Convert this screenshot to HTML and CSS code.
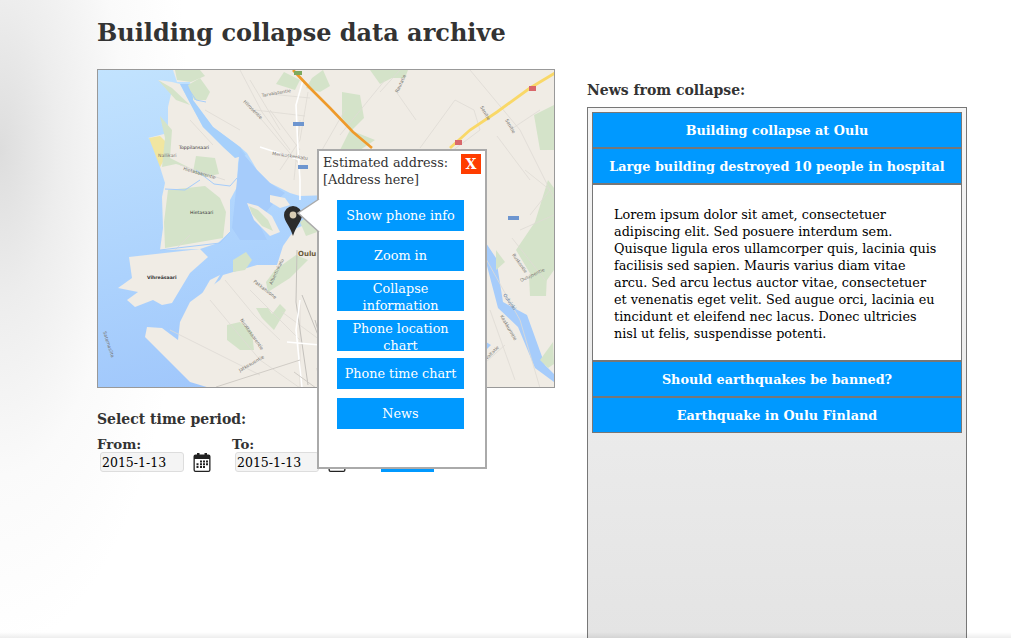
FILE: index.html
```html
<!DOCTYPE html>
<html lang="en">
<head>
<meta charset="utf-8">
<title>Building collapse data archive</title>
<link rel="stylesheet" href="styles.css">
</head>
<body>
<div class="page">
  <h1 class="title">Building collapse data archive</h1>
  <div class="columns">
    <div class="left">
      <div class="map-wrap">
        <svg class="map" viewBox="98 70 456 317" preserveAspectRatio="none" aria-label="Map of Oulu">
          <defs>
            <linearGradient id="sea" x1="0" y1="0" x2="0.35" y2="1">
              <stop offset="0" stop-color="#c2e3fe"/>
              <stop offset="0.6" stop-color="#acd2fd"/>
              <stop offset="1" stop-color="#9fc6fb"/>
            </linearGradient>
            <filter id="soft"><feGaussianBlur stdDeviation="0.4"/></filter>
          </defs>
          <rect x="98" y="70" width="456" height="317" fill="url(#sea)"/>
          <g filter="url(#soft)">
            <path class="land" d="M173 70L177 82L190 82L193 100L213 127L240 147L247 153L257 170L270 183L290 193L300 196L330 195L330 215L297 228L290 236L283 246L277 265L257 265L223 275L220 280L190 302L180 322L178 340L162 328L147 327L145 337L190 382L210 388L554 388L554 70Z"/>
            <path class="land" d="M158 80L172 90L168 107L168 133L148 138L162 143L160 167L165 183L162 197L163 228L160 250L200 249L218 243L230 232L230 200L237 187L238 163L240 150L223 145L203 127L190 103L180 84L172 82Z"/>
            <path class="land" d="M129 257L200 249L208 257L190 273L172 303L162 305L153 300L135 307L127 300L138 292L118 288L132 278Z"/>
            <path class="water-river" d="M180 84L193 84L193 100L213 127L240 147L246 155L235 158L223 147L203 127L190 103Z"/>
            <path class="water" d="M240 150L257 170L270 183L285 193L272 205L258 222L267 240L240 240L232 228L236 190Z"/>
            <path class="land" d="M270 195L285 198L290 205L280 208L270 202Z"/>
            <path class="land" d="M247 203L258 206L272 216L280 232L270 236L254 220Z"/>
            <path class="park" d="M249 206L258 210L268 220L273 231L262 226L252 214Z"/>
            <path class="water" d="M486 243L496 258L503 302L527 315L545 365L554 374L554 382L535 368L518 327L498 308L486 262Z"/>
            <path class="water" d="M486 342L491 345L486 350Z"/>
            <path class="sand" d="M149 138L160 136L166 142L164 160L160 167Z"/>
            <path class="park" d="M160 116L172 130L170 158L190 168L176 164L162 167L165 138Z"/>
            <path class="park" d="M196 156L215 158L219 174L205 177L193 172Z"/>
            <path class="park" d="M168 190L205 186L220 198L226 212L223 238L165 248L164 222Z"/>
            <path class="park" d="M158 80L172 88L190 105L176 100Z"/>
            <path class="park" d="M188 85L200 78L210 92L206 100L194 100Z"/>
            <path class="park" d="M175 70L200 70L205 76L191 82L177 80Z"/>
            <path class="park" d="M233 260L246 252L252 260L245 270L233 272Z"/>
            <path class="land" d="M195 306L210 280L220 275L212 288L198 305Z"/>
            <path class="park" d="M227 325L240 322L252 332L254 350L240 350L227 340Z"/>
            <path class="park" d="M266 282L275 270L296 255L308 260L290 278L268 292Z"/>
            <path class="park" d="M256 308L268 308L272 314L280 304L286 310L274 330L262 318Z"/>
            <path class="park" d="M300 222L317 210L317 232L306 236Z"/>
            <path class="park" d="M323 70L330 86L320 92L306 88L312 78Z"/>
            <path class="park" d="M342 92L360 95L364 118L352 130L342 118Z"/>
            <path class="park" d="M370 70L408 70L405 78L392 78L380 84Z"/>
            <path class="park" d="M350 130L375 140L360 150L340 150Z"/>
            <path class="park" d="M516 250L535 222L548 180L554 188L554 270L540 290L528 270Z"/>
            <path class="park" d="M534 115L554 105L554 150L540 150Z"/>
            <path class="park" d="M529 276L547 275L546 296L530 296Z"/>
            <path class="park" d="M496 250L505 262L496 270Z"/>
            <path class="park" d="M540 360L553 342L554 364L548 368Z"/>
            <path class="park" d="M284 72L300 80L295 90L276 84Z"/>
            <path class="minor" d="M240 70L262 112L290 150M250 80L280 130M270 94L310 98M255 110L305 116M300 120L294 180M270 110L300 150M245 100L300 165M308 92L300 140L280 170M340 135L385 80M322 150L345 110M420 148L455 100L474 110L480 130L440 160M395 90L416 120M380 92L400 70M470 70L520 130L560 210M540 110L510 130M525 170L550 190L530 215M520 230L554 215M497 136L530 180M512 238L545 280M470 230L520 320L540 388M490 310L515 380M505 345L486 362M180 165L225 180M205 110L240 130M190 120L213 145M175 250L190 235M210 300L260 360L300 388M170 330L260 375M250 290L300 340M225 280L254 315L280 340M300 300L300 388M282 312L320 340"/>
            <path class="dark" d="M297 250L296 302L308 385M302 295L320 340L326 388M315 320L330 372"/>
            <path class="road" d="M303 80L296 105L298 150L300 180L300 200M300 300L296 330L302 388M260 147L300 160M287 342L320 345"/>
            <path class="tract" d="M294 372L316 388M317 368L320 388M216 387L300 360"/>
            <path class="orange" d="M293 70L310 88L330 108L353 132L372 148"/>
            <path class="yellow" d="M555 73L530 88L497 112L470 130L450 148"/>
            <path class="water-thin" d="M188 88L196 100L206 102M196 170L214 184L230 186L237 178M165 189L185 190L200 180M160 250L220 243L230 232"/>
          </g>
          <rect class="shield-r" x="529" y="86" width="7" height="5"/>
          <rect class="shield-r" x="455" y="140" width="7" height="5"/>
          <rect class="shield-b" x="293" y="122" width="11" height="4"/>
          <rect class="shield-b" x="298" y="165" width="10" height="4"/>
          <rect class="shield-b" x="508" y="216" width="11" height="4"/>
          <rect class="shield-g" x="294" y="71" width="8" height="4"/>
          <text class="lbl dk" x="179" y="149">Toppilansaari</text>
          <text class="lbl" x="158" y="157">Nallikari</text>
          <text class="lbl dk" x="190" y="214">Hietasaari</text>
          <text class="lbl dk b" x="147" y="279">Vihreäsaari</text>
          <text class="lbl city" x="298" y="256">Oulu</text>
          <text class="lbl" transform="translate(103 332) rotate(72)">Satamasilta</text>
          <text class="lbl" transform="translate(243 102) rotate(45)">Hiirosentie</text>
          <text class="lbl" transform="translate(262 97) rotate(-10)">Tarvaistentie</text>
          <text class="lbl" transform="translate(183 170) rotate(16)">Hietasaarentie</text>
          <text class="lbl" transform="translate(272 285) rotate(-65)">Albertinkatu</text>
          <text class="lbl" transform="translate(253 282) rotate(38)">Pakkahuone</text>
          <text class="lbl" transform="translate(240 372) rotate(-30)">Jatkosuontie</text>
          <text class="lbl" transform="translate(240 320) rotate(55)">Nuottasaarentie</text>
          <text class="lbl" transform="translate(272 155) rotate(8)">Merikoskenkatu</text>
          <text class="lbl" transform="translate(398 93) rotate(-65)">Rautatie</text>
          <text class="lbl" transform="translate(480 107) rotate(60)">Sanitie</text>
          <text class="lbl" transform="translate(505 120) rotate(60)">Sanitie</text>
          <text class="lbl" transform="translate(512 255) rotate(55)">Ruskontie</text>
          <text class="lbl" transform="translate(521 282) rotate(-25)">Oulujoentie</text>
          <text class="lbl water-lbl" transform="translate(503 295) rotate(55)">Oulujoki</text>
          <text class="lbl" transform="translate(500 316) rotate(60)">Kaakkurintie</text>
          <text class="lbl" transform="translate(487 360) rotate(-45)">Valtatie</text>
          <path class="pin" d="M293 206a9 9 0 0 1 9 9c0 6-6 11-9 21c-3-10-9-15-9-21a9 9 0 0 1 9-9z"/>
          <circle class="pin-dot" cx="293" cy="215" r="3.4"/>
        </svg>
        <div class="popup">
          <svg class="popup-tail" viewBox="0 0 24 40" aria-hidden="true">
            <path class="tail-shape" d="M23 3L2 17L23 36"/>
          </svg>
          <div class="popup-head">
            <p class="address">Estimated address:<br>[Address here]</p>
            <button class="close" type="button">X</button>
          </div>
          <div class="actions">
            <a class="action action-one">Show phone info</a>
            <a class="action action-one">Zoom in</a>
            <a class="action">Collapse information</a>
            <a class="action action-narrow">Phone location chart</a>
            <a class="action action-one">Phone time chart</a>
            <a class="action action-one">News</a>
          </div>
        </div>
      </div>
      <h2 class="subhead time-head">Select time period:</h2>
      <div class="dates">
        <div class="date-field">
          <label class="date-label">From:</label>
          <div class="date-row">
            <input class="date-input" type="text" value="2015-1-13">
            <svg class="cal" viewBox="0 0 20 20" aria-hidden="true">
              <path class="cal-body" fill-rule="evenodd" d="M4 2.5h1V1h2.5v1.5h5V1H15v1.5h1.5A2 2 0 0 1 18.5 4.5V18a2 2 0 0 1-2 2h-13a2 2 0 0 1-2-2V4.5a2 2 0 0 1 2-2zM2.8 7V18a.7.7 0 0 0 .7.7h13a.7.7 0 0 0 .7-.7V7z"/>
              <path class="cal-grid" d="M8 8.5h2v2H8zM11 8.5h2v2h-2zM14 8.5h2v2h-2zM4.5 11.2h2v2h-2zM8 11.2h2v2H8zM11 11.2h2v2h-2zM14 11.2h2v2h-2zM4.5 14h2v2h-2zM8 14h2v2H8zM11 14h2v2h-2z"/>
            </svg>
          </div>
        </div>
        <div class="date-field">
          <label class="date-label">To:</label>
          <div class="date-row">
            <input class="date-input" type="text" value="2015-1-13">
            <svg class="cal" viewBox="0 0 20 20" aria-hidden="true">
              <path class="cal-body" fill-rule="evenodd" d="M4 2.5h1V1h2.5v1.5h5V1H15v1.5h1.5A2 2 0 0 1 18.5 4.5V18a2 2 0 0 1-2 2h-13a2 2 0 0 1-2-2V4.5a2 2 0 0 1 2-2zM2.8 7V18a.7.7 0 0 0 .7.7h13a.7.7 0 0 0 .7-.7V7z"/>
              <path class="cal-grid" d="M8 8.5h2v2H8zM11 8.5h2v2h-2zM14 8.5h2v2h-2zM4.5 11.2h2v2h-2zM8 11.2h2v2H8zM11 11.2h2v2h-2zM14 11.2h2v2h-2zM4.5 14h2v2h-2zM8 14h2v2H8zM11 14h2v2h-2z"/>
            </svg>
          </div>
        </div>
        <button class="go" type="button"></button>
      </div>
    </div>
    <div class="right">
      <h2 class="subhead news-head">News from collapse:</h2>
      <div class="news">
        <h3 class="news-item">Building collapse at Oulu</h3>
        <h3 class="news-item">Large building destroyed 10 people in hospital</h3>
        <div class="news-body">Lorem ipsum dolor sit amet, consectetuer adipiscing elit. Sed posuere interdum sem. Quisque ligula eros ullamcorper quis, lacinia quis facilisis sed sapien. Mauris varius diam vitae arcu. Sed arcu lectus auctor vitae, consectetuer et venenatis eget velit. Sed augue orci, lacinia eu tincidunt et eleifend nec lacus. Donec ultricies nisl ut felis, suspendisse potenti.</div>
        <h3 class="news-item">Should earthquakes be banned?</h3>
        <h3 class="news-item">Earthquake in Oulu Finland</h3>
      </div>
    </div>
  </div>
</div>
<div class="bottom-shade"></div>
</body>
</html>
```
FILE: styles.css
```css
html, body {
  margin: 0;
  height: 638px;
  overflow: hidden;
}
body {
  position: relative;
  font-family: "DejaVu Serif", serif;
  color: #333;
  background: radial-gradient(ellipse 190px 500px at 0 150px, #dddddd 0%, #ededed 30%, #fafafa 65%, #ffffff 100%), #fff;
}
.page {
  padding: 0 0 0 97px;
}
.title {
  margin: 0;
  padding-top: 18px;
  font-size: 24px;
  line-height: 30px;
  font-weight: bold;
  color: #333;
}
.columns {
  display: flex;
  gap: 32px;
  margin-top: 21px;
}
.left {
  width: 458px;
}
.right {
  width: 380px;
}
.map-wrap {
  position: relative;
  height: 319px;
}
.map {
  display: block;
  width: 456px;
  height: 317px;
  border: 1px solid #999;
}
.land { fill: #f0ece5; }
.park { fill: #d4e3c9; }
.sand { fill: #f1e6a0; }
.water { fill: #a6ccfb; }
.water-river { fill: #a6d0fb; }
.minor { fill: none; stroke: #dedad4; stroke-width: 0.8; }
.dark { fill: none; stroke: #c4c1bc; stroke-width: 1; }
.road { fill: none; stroke: #fff; stroke-width: 1.6; }
.tract { fill: none; stroke: #d0ccc6; stroke-width: 1; }
.orange { fill: none; stroke: #ee9a2a; stroke-width: 2.6; }
.yellow { fill: none; stroke: #f9d868; stroke-width: 2.8; }
.water-thin { fill: none; stroke: #a6cdfb; stroke-width: 1; }
.shield-r { fill: #d9676a; }
.shield-b { fill: #6d95cf; }
.shield-g { fill: #7ea95e; }
.lbl { font-family: "DejaVu Sans", sans-serif; font-size: 4.6px; fill: #77746f; }
.dk { fill: #333; }
.b { font-weight: bold; }
.city { font-size: 7px; fill: #6b5a3c; font-weight: bold; }
.water-lbl { fill: #4d6f99; }
.pin { fill: #2c2c2c; }
.pin-dot { fill: #d9cdb4; }
.popup {
  position: absolute;
  z-index: 2;
  left: 220px;
  top: 80px;
  box-sizing: border-box;
  width: 170px;
  height: 320px;
  border: 2px solid #aaa;
  background: #fff;
  padding: 3px 4px 4px;
}
.popup-tail {
  position: absolute;
  left: -23px;
  top: 45px;
  width: 24px;
  height: 40px;
  overflow: visible;
}
.tail-shape { fill: #fff; stroke: #aaa; stroke-width: 1.5; }
.popup-head {
  display: flex;
  justify-content: space-between;
  align-items: flex-start;
}
.address {
  margin: 0;
  font-size: 12.8px;
  line-height: 17px;
  color: #333;
}
.close {
  width: 20px;
  height: 20px;
  margin: 0;
  padding: 0;
  border: 0;
  background: #ff3d00;
  color: #fff;
  font-family: "DejaVu Serif", serif;
  font-size: 14px;
  font-weight: bold;
}
.actions {
  display: flex;
  flex-direction: column;
  align-items: flex-start;
  margin: 12px 0 0 14px;
}
.action {
  box-sizing: border-box;
  display: block;
  width: 127px;
  height: 31px;
  margin-bottom: 9px;
  overflow: hidden;
  background: #0099ff;
  color: #fff;
  text-align: center;
  font-size: 12.8px;
  line-height: 17px;
}
.action-one {
  line-height: 31px;
}
.action-narrow {
  margin-bottom: 7px;
}
.subhead {
  margin: 0;
  font-size: 14px;
  line-height: 18px;
  font-weight: bold;
  color: #333;
}
.time-head {
  margin-top: 22px;
}
.dates {
  display: flex;
  margin-top: 8px;
}
.date-field {
  width: 135px;
}
.date-label {
  display: block;
  font-size: 13.33px;
  line-height: 16px;
  font-weight: bold;
  color: #333;
}
.date-row {
  display: flex;
  align-items: center;
  gap: 8px;
  padding-left: 3px;
}
.date-input {
  box-sizing: border-box;
  width: 84px;
  height: 20px;
  margin: 0;
  padding: 0 1px;
  border: 1px solid #ddd;
  border-radius: 3px;
  background: #f4f4f4;
  color: #000;
  font-family: "DejaVu Serif", serif;
  font-size: 12.5px;
}
.cal {
  width: 20px;
  height: 20px;
  flex: none;
}
.cal-body, .cal-grid { fill: #222; }
.go {
  width: 53px;
  height: 24px;
  margin: 12px 0 0 14px;
  border: 0;
  padding: 0;
  background: #0099ff;
}
.news-head {
  margin-top: 12px;
  line-height: 19px;
}
.news {
  box-sizing: border-box;
  height: 560px;
  margin-top: 7px;
  padding: 4px;
  border: 1px solid #777;
  background: linear-gradient(#f5f5f5, #e3e3e3);
}
.news-item {
  box-sizing: border-box;
  height: 36px;
  margin: 0;
  border: 1px solid #777;
  background: #0099ff;
  color: #fff;
  text-align: center;
  font-size: 12.8px;
  line-height: 36px;
  font-weight: bold;
}
.news-body {
  box-sizing: border-box;
  height: 177px;
  padding: 21px 21px 0;
  border: 1px solid #777;
  background: #fff;
  color: #000;
  font-size: 12.8px;
  line-height: 17px;
}
.bottom-shade {
  position: absolute;
  left: 0;
  right: 0;
  bottom: 0;
  height: 6px;
  background: linear-gradient(rgba(0,0,0,0), rgba(0,0,0,0.07));
}
```
